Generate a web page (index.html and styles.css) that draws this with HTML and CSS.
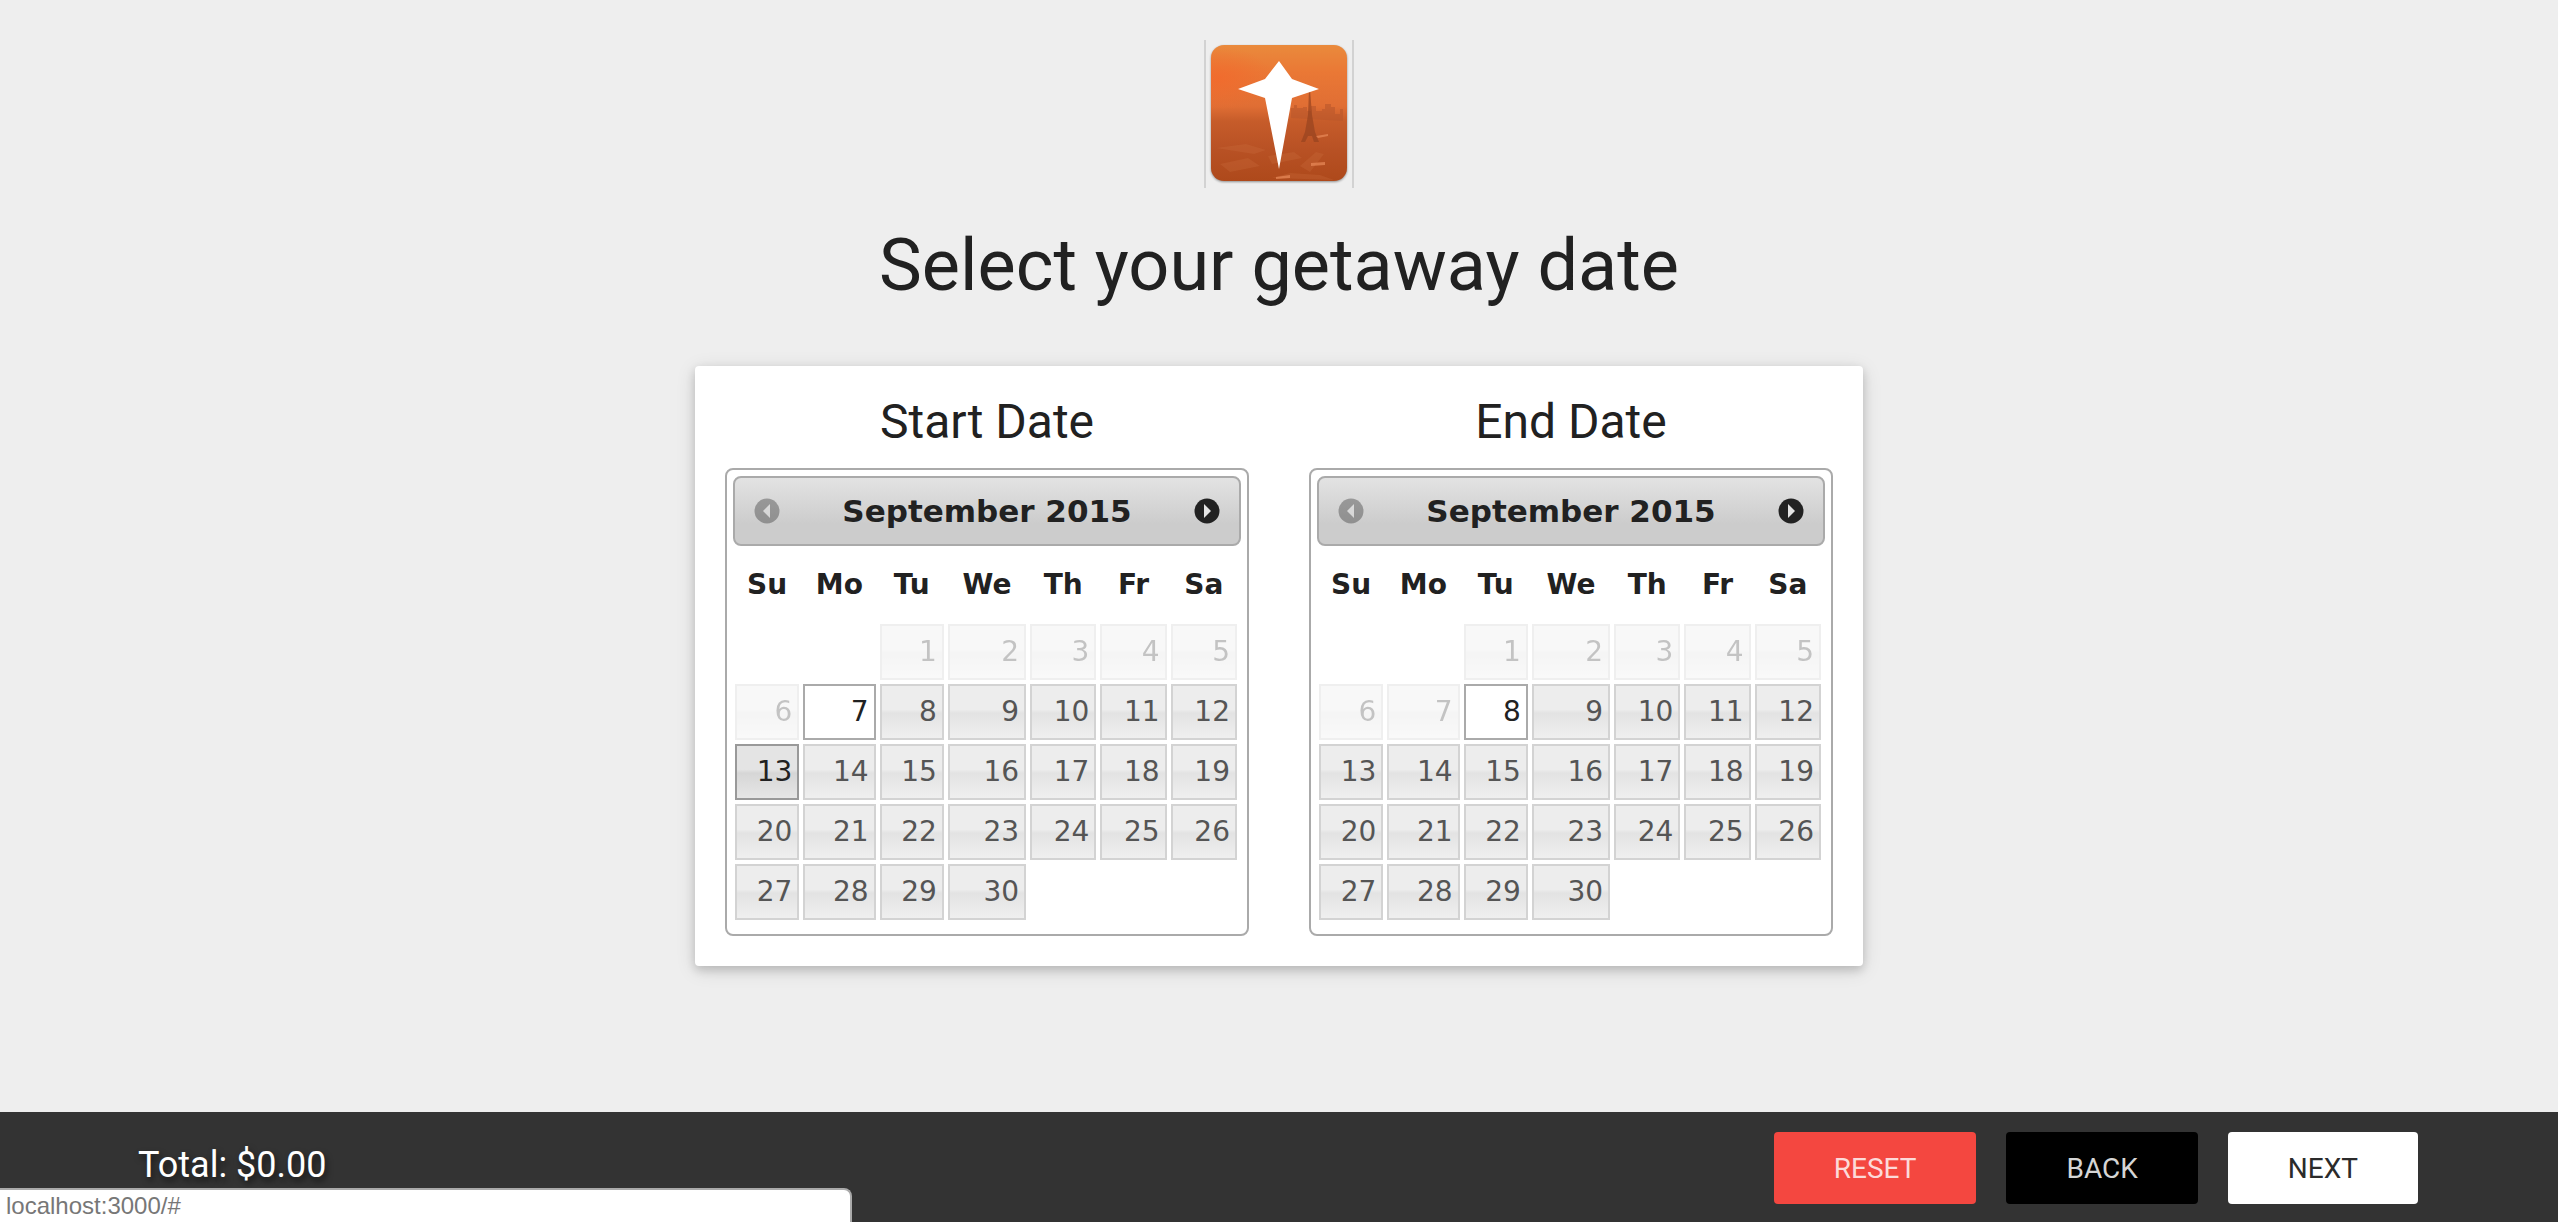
FILE: index.html
```html
<!DOCTYPE html>
<html lang="en">
<head>
    <meta charset="UTF-8">
    <meta name="viewport" content="width=device-width, initial-scale=1.0">
    <title>Select your getaway date</title>
    <link rel="stylesheet" href="styles.css">
</head>
<body>
    <main>
        <div class="logo">
            <svg width="138" height="138" viewBox="0 1 138 138" role="img" aria-label="Logo">
                <defs>
                    <linearGradient id="sky" x1="0" y1="0" x2="0" y2="1">
                        <stop offset="0" stop-color="#ea8a3c" />
                        <stop offset="0.2" stop-color="#ea7835" />
                        <stop offset="0.45" stop-color="#e06e34" />
                        <stop offset="0.56" stop-color="#c65c2a" />
                        <stop offset="0.75" stop-color="#b95225" />
                        <stop offset="1" stop-color="#ae491b" />
                    </linearGradient>
                    <radialGradient id="glow" cx="0.05" cy="0.42" r="0.4">
                        <stop offset="0" stop-color="#f2692c" stop-opacity="0.8" />
                        <stop offset="1" stop-color="#f2692c" stop-opacity="0" />
                    </radialGradient>
                </defs>
                <rect class="logo-shadow" x="1" y="1" width="136" height="136" rx="13" fill="url(#sky)" />
                <rect x="1" y="1" width="136" height="80" rx="13" fill="url(#glow)" />
                <!-- Skyline -->
                <path d="M81 74V64h3v-3h3v3h6v-1h4v4h4v-5h5v5h6v-2h3v-5h6v3h4v7h5v-5h3v12z" fill="#b9562b" opacity="0.6" />
                <!-- Tower -->
                <path d="M99 45h1l2 26 3 17 4 10h-5l-2-6h-4l-3 6h-4l4-10 3-17z" fill="#97431f" opacity="0.7" />
                <!-- Roofs -->
                <path d="M6 104l30-4 20 6-12 4zM58 112l26-4 8 6-30 6zM90 122l16-14 8 2-14 18zM10 120l28-6 12 8-30 6zM62 134l18-5 30 2 14 5z" fill="#cf7444" opacity="0.25" />
                <path d="M101 119l14-1v3l-14 1zM106 92l12-2v2l-10 2zM66 133l14-2v3l-14 1z" fill="#e88a5a" opacity="0.7" />
                <path d="M69 17l13 18 27 10-27 9-13 71-14-71-27-9 27-10z" fill="#fff" />
            </svg>
        </div>

        <h1>Select your getaway date</h1>

        <div class="card">
            <section>
                <h2>Start Date</h2>
                <div class="datepicker" id="start-date"></div>
            </section>
            <section>
                <h2>End Date</h2>
                <div class="datepicker" id="end-date"></div>
            </section>
        </div>
    </main>

    <footer>
        <p class="total">Total: $0.00</p>
        <div class="buttons">
            <button type="button" class="reset">RESET</button>
            <button type="button" class="back">BACK</button>
            <button type="button" class="next">NEXT</button>
        </div>
    </footer>

    <div class="status">localhost:3000/#</div>

    <script src="script.js"></script>
</body>
</html>
```

FILE: styles.css
```css
* {
    box-sizing: border-box;
}

body {
    margin: 0;
    background-color: #eee;
    color: #212121;
    font-family: Roboto, sans-serif;
    font-size: 28px;
    line-height: 42px;
}

main {
    display: flex;
    flex-direction: column;
    align-items: center;
    padding: 40px 20px 140px;
}

.logo {
    display: flex;
    align-items: center;
    justify-content: center;
    width: 150px;
    height: 148px;
    border: solid #d2d2d2;
    border-width: 0 2px;
}

.logo svg {
    overflow: visible;
}

.logo-shadow {
    filter: drop-shadow(0 1px 1px rgba(0, 0, 0, 0.4));
}

h1 {
    margin: 38px 0 60px;
    font-size: 72px;
    font-weight: 400;
    line-height: 80px;
}

.card {
    display: flex;
    flex-wrap: wrap;
    gap: 60px;
    padding: 30px;
    background-color: #fff;
    border-radius: 4px;
    box-shadow: 0 4px 10px rgba(0, 0, 0, 0.16), 0 4px 20px rgba(0, 0, 0, 0.12);
}

h2 {
    margin: 0 0 20px;
    font-size: 48px;
    font-weight: 400;
    line-height: 52px;
    text-align: center;
}

.datepicker {
    width: 524px;
    padding: 6px 6px 12px;
    border: 2px solid #aaa;
    border-radius: 8px;
    font-family: Verdana, "DejaVu Sans", sans-serif;
}

.datepicker-header {
    display: flex;
    align-items: center;
    justify-content: space-between;
    height: 70px;
    padding: 0 18px;
    border: 2px solid #aaa;
    border-radius: 8px;
    background: linear-gradient(#e3e3e3, #ccc 70%, #ccc);
    font-size: 31px;
    font-weight: bold;
}

.arrow {
    display: flex;
    padding: 0;
    border: 0;
    background: none;
    cursor: pointer;
}

.arrow:disabled {
    opacity: 0.35;
    cursor: default;
}

table {
    width: 506px;
    margin-top: 2px;
    border-collapse: collapse;
    table-layout: fixed;
}

.narrow {
    width: 68px;
}

.medium {
    width: 70px;
}

.wide {
    width: 76px;
}

.widest {
    width: 82px;
}

th {
    height: 74px;
    padding: 0;
}

td {
    padding: 2px;
}

td a,
td span {
    display: block;
    padding: 5px;
    border: 2px solid #d3d3d3;
    background: linear-gradient(#ededed 45%, #e3e3e3 52%, #efefef);
    color: #555;
    text-align: right;
    text-decoration: none;
}

td span {
    opacity: 0.35;
}

td .selected {
    border-color: #aaa;
    background: #fff;
    color: #212121;
}

td .hover {
    border-color: #999;
    background: linear-gradient(#e4e4e4 45%, #d6d6d6 52%, #e6e6e6);
    color: #212121;
}

footer {
    position: fixed;
    right: 0;
    bottom: 0;
    left: 0;
    display: flex;
    justify-content: space-between;
    padding: 20px 140px 18px 138px;
    background-color: #333;
}

.total {
    margin: 12px 0 0;
    color: #fff;
    font-size: 36px;
    text-shadow: 2px 4px 6px rgba(0, 0, 0, 0.6);
}

.buttons {
    display: flex;
    gap: 30px;
}

.buttons button {
    height: 72px;
    padding: 0 60px;
    border: 0;
    border-radius: 4px;
    font: 28px Roboto, sans-serif;
    cursor: pointer;
}

.buttons .reset {
    background-color: #f44740;
    color: #fcdad9;
}

.buttons .back {
    background-color: #000;
    color: #d5d5d5;
}

.buttons .next {
    background-color: #fff;
    color: #2b2b2b;
}

.status {
    position: fixed;
    bottom: 0;
    left: 0;
    width: 852px;
    height: 34px;
    padding-left: 6px;
    border: solid #aaa;
    border-width: 2px 2px 0 0;
    border-radius: 0 8px 0 0;
    background-color: #fff;
    color: #777;
    font: 24px/32px "Liberation Sans", Arial, sans-serif;
}
```

FILE: script.js
```js
const days = ['Su', 'Mo', 'Tu', 'We', 'Th', 'Fr', 'Sa'];
const columns = ['narrow', 'wide', 'narrow', 'widest', 'medium', 'medium', 'medium'];
const firstWeekday = 2; // September 1st is a Tuesday
const daysInMonth = 30;

function arrow(label, path, disabled) {
    return `<button type="button" class="arrow" aria-label="${label}" ${disabled ? 'disabled' : ''}>
        <svg width="28" height="28" viewBox="0 0 28 28">
            <circle cx="14" cy="14" r="12.5" fill="#222" />
            <path d="${path}" fill="#e4e4e4" />
        </svg>
    </button>`;
}

function dayCell(day, selected, hovered) {
    if (day < 1 || day > daysInMonth) {
        return '<td></td>';
    }
    if (day < selected) {
        return `<td><span>${day}</span></td>`;
    }
    let state = '';
    if (day === selected) state = 'selected';
    if (day === hovered) state = 'hover';
    return `<td><a href="#" class="${state}">${day}</a></td>`;
}

function renderDatepicker(id, selected, hovered) {
    let rows = '';
    for (let week = 0; week < 5; week++) {
        rows += '<tr>';
        for (let i = 0; i < 7; i++) {
            rows += dayCell(week * 7 + i - firstWeekday + 1, selected, hovered);
        }
        rows += '</tr>';
    }

    document.getElementById(id).innerHTML = `
        <div class="datepicker-header">
            ${arrow('Previous month', 'M17 7v14l-7-7z', true)}
            <span>September 2015</span>
            ${arrow('Next month', 'M11 7v14l7-7z', false)}
        </div>
        <table>
            <colgroup>${columns.map(name => `<col class="${name}">`).join('')}</colgroup>
            <thead><tr>${days.map(day => `<th scope="col">${day}</th>`).join('')}</tr></thead>
            <tbody>${rows}</tbody>
        </table>`;
}

renderDatepicker('start-date', 7, 13);
renderDatepicker('end-date', 8);
```
